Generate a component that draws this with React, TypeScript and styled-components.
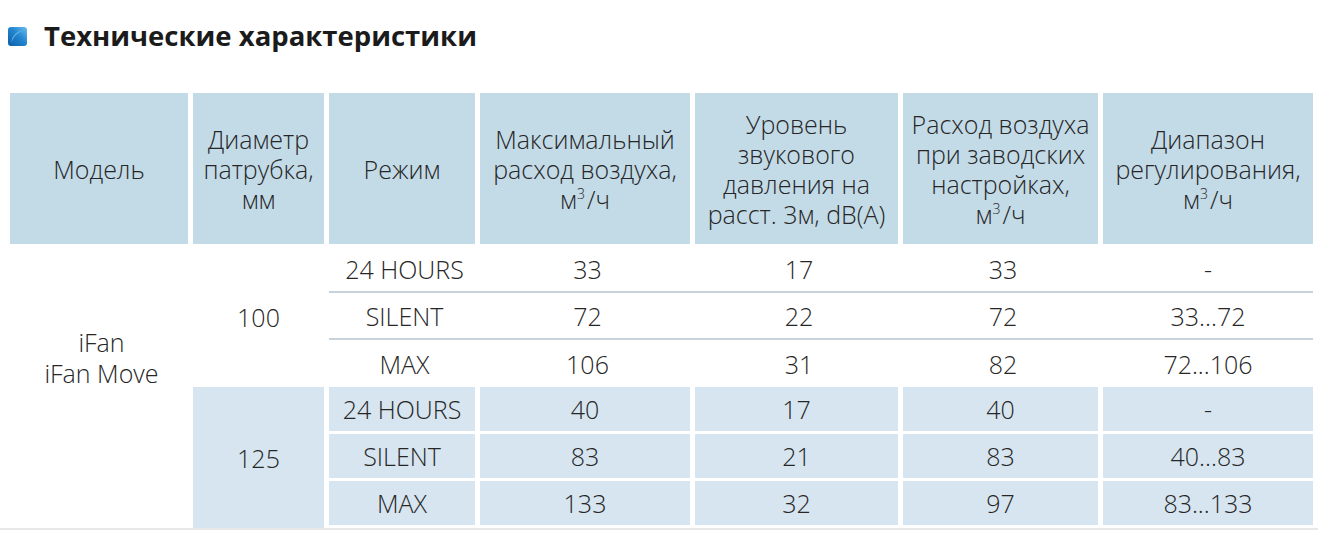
import React from "react";
import styled, { createGlobalStyle } from "styled-components";

const Global = createGlobalStyle`
  html, body { margin: 0; padding: 0; background: #fff; }
  body { font-family: "Open Sans", "Noto Sans", sans-serif; color: #262626; }
`;

const Page = styled.div`
  width: 1331px;
  height: 559px;
  box-sizing: border-box;
  overflow: hidden;
`;

const TitleRow = styled.div`
  display: flex;
  align-items: center;
  gap: 17px;
  padding: 18px 0 0 8px;
  height: 36px;
`;

const Title = styled.h2`
  margin: 0;
  font-family: "Open Sans", "Noto Sans", sans-serif;
  font-weight: 700;
  font-size: 27.5px;
  line-height: 36px;
  color: #1b1b1b;
`;

const Section = styled.div`
  margin-top: 39px;
  width: 1318px;
  padding-left: 10px;
  box-sizing: border-box;
  border-bottom: 2px solid #e6e8ea;
`;

const Table = styled.table`
  border-collapse: separate;
  border-spacing: 0;
  table-layout: fixed;
  width: 1303px;
  font-family: "Open Sans", "Noto Sans", sans-serif;
  font-weight: 300;
  font-size: 25px;
  color: #262626;
`;

const HeadCell = styled.th<{ $last?: boolean }>`
  height: 153px;
  padding: 0 2px;
  box-sizing: border-box;
  background: #c3dae7;
  background-clip: padding-box;
  border-right: ${(p) => (p.$last ? "0" : "5px solid #fff")};
  border-bottom: 2px solid #fff;
  font-weight: 300;
  line-height: 30px;
  text-align: center;
  vertical-align: middle;
`;

const Cell = styled.td<{ $tone?: "plain" | "blue"; $line?: boolean; $last?: boolean }>`
  height: 47px;
  padding: 0;
  box-sizing: border-box;
  text-align: center;
  vertical-align: middle;
  line-height: 30px;
  background: ${(p) => (p.$tone === "blue" ? "#d6e5ef" : "transparent")};
  background-clip: padding-box;
  border-right: ${(p) => (p.$tone === "blue" && !p.$last ? "5px solid #fff" : "0")};
  border-bottom: ${(p) =>
    p.$line ? "2px solid #c8d2db" : p.$tone === "blue" ? "3px solid #fff" : "0"};
  padding-top: ${(p) => (p.$line ? "1px" : "0")};
`;

const ModelCell = styled.td`
  padding: 0 0 58px;
  text-align: center;
  vertical-align: middle;
  line-height: 31px;
`;

const DiamCell = styled.td<{ $tone?: "plain" | "blue" }>`
  padding: 0;
  text-align: center;
  vertical-align: middle;
  background: ${(p) => (p.$tone === "blue" ? "#d6e5ef" : "transparent")};
  background-clip: padding-box;
  border-right: 5px solid #fff;
`;

const Sup = styled.sup`
  font-size: 14px;
  vertical-align: 10px;
  line-height: 0;
  margin-right: 2px;
`;

const Icon = () => (
  <svg width="19" height="19" viewBox="0 0 19 19">
    <defs>
      <linearGradient id="ig" x1="0" y1="1" x2="1" y2="0">
        <stop offset="0" stopColor="#0b5fa8" />
        <stop offset="0.55" stopColor="#2386cf" />
        <stop offset="1" stopColor="#6cc0ee" />
      </linearGradient>
      <linearGradient id="ih" x1="0" y1="0" x2="1" y2="1">
        <stop offset="0" stopColor="#8fd0f5" stopOpacity="0.9" />
        <stop offset="1" stopColor="#8fd0f5" stopOpacity="0" />
      </linearGradient>
    </defs>
    <rect x="0" y="0" width="19" height="19" rx="3" fill="url(#ig)" />
    <path d="M3 16 Q4 5 16 3 L16 3 Q7 6 3 16 Z" fill="url(#ih)" />
  </svg>
);

const Unit = () => (
  <>
    м<Sup>3</Sup>/ч
  </>
);

type Row = { mode: string; max: string; level: string; factory: string; range: string };

const groups: { diam: string; tone: "plain" | "blue"; rows: Row[] }[] = [
  {
    diam: "100",
    tone: "plain",
    rows: [
      { mode: "24 HOURS", max: "33", level: "17", factory: "33", range: "-" },
      { mode: "SILENT", max: "72", level: "22", factory: "72", range: "33...72" },
      { mode: "MAX", max: "106", level: "31", factory: "82", range: "72...106" },
    ],
  },
  {
    diam: "125",
    tone: "blue",
    rows: [
      { mode: "24 HOURS", max: "40", level: "17", factory: "40", range: "-" },
      { mode: "SILENT", max: "83", level: "21", factory: "83", range: "40...83" },
      { mode: "MAX", max: "133", level: "32", factory: "97", range: "83...133" },
    ],
  },
];

export default function App() {
  return (
    <Page>
      <Global />
      <TitleRow>
        <Icon />
        <Title>Технические характеристики</Title>
      </TitleRow>
      <Section>
        <Table>
          <colgroup>
            <col style={{ width: 183 }} />
            <col style={{ width: 136 }} />
            <col style={{ width: 151 }} />
            <col style={{ width: 215 }} />
            <col style={{ width: 208 }} />
            <col style={{ width: 200 }} />
            <col style={{ width: 210 }} />
          </colgroup>
          <thead>
            <tr>
              <HeadCell>Модель</HeadCell>
              <HeadCell>
                Диаметр
                <br />
                патрубка,
                <br />
                мм
              </HeadCell>
              <HeadCell>Режим</HeadCell>
              <HeadCell>
                Максимальный
                <br />
                расход воздуха,
                <br />
                <Unit />
              </HeadCell>
              <HeadCell>
                Уровень
                <br />
                звукового
                <br />
                давления на
                <br />
                расст. 3м, dB(A)
              </HeadCell>
              <HeadCell>
                Расход воздуха
                <br />
                при заводских
                <br />
                настройках,
                <br />
                <Unit />
              </HeadCell>
              <HeadCell $last>
                Диапазон
                <br />
                регулирования,
                <br />
                <Unit />
              </HeadCell>
            </tr>
          </thead>
          <tbody>
            {groups.map((g, gi) =>
              g.rows.map((r, ri) => {
                const line = g.tone === "plain" && ri < g.rows.length - 1;
                return (
                  <tr key={`${gi}-${ri}`}>
                    {gi === 0 && ri === 0 && (
                      <ModelCell rowSpan={6}>
                        iFan
                        <br />
                        iFan Move
                      </ModelCell>
                    )}
                    {ri === 0 && (
                      <DiamCell rowSpan={3} $tone={g.tone}>
                        {g.diam}
                      </DiamCell>
                    )}
                    <Cell $tone={g.tone} $line={line}>{r.mode}</Cell>
                    <Cell $tone={g.tone} $line={line}>{r.max}</Cell>
                    <Cell $tone={g.tone} $line={line}>{r.level}</Cell>
                    <Cell $tone={g.tone} $line={line}>{r.factory}</Cell>
                    <Cell $tone={g.tone} $line={line} $last>{r.range}</Cell>
                  </tr>
                );
              })
            )}
          </tbody>
        </Table>
      </Section>
    </Page>
  );
}
